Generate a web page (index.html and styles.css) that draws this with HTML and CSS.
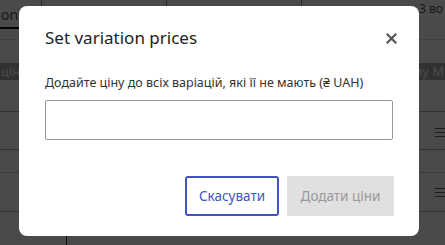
FILE: index.html
```html
<!DOCTYPE html>
<html lang="uk">
  <head>
    <meta charset="UTF-8" />
    <title>Set variation prices</title>
    <link rel="stylesheet" href="styles.css">
  </head>
  <body>
    <div class="page">
      <div class="tabs">
        <div class="tab tab-active">ons</div>
        <div class="tab tab-wide"></div>
        <div class="tab tab-wide">Bulk</div>
        <div class="tab tab-count">3 во</div>
      </div>
      <div class="spacer"></div>
      <div class="thead">
        <span>цін.</span>
        <span>ому М</span>
      </div>
      <div class="row row-a"></div>
      <div class="row row-b"><span class="handle"></span></div>
      <div class="row row-c"></div>
      <div class="row row-d"><span class="handle"></span></div>
      <div class="row row-e"><span class="cell-first"></span></div>
    </div>

    <div class="overlay">
      <div class="modal">
        <div class="modal-head">
          <h2>Set variation prices</h2>
          <button class="close" aria-label="Close">
            <svg width="11" height="11" viewBox="0 0 11 11">
              <path d="M1.5 1.5 L9.5 9.5 M9.5 1.5 L1.5 9.5" stroke="#555" stroke-width="2.2" stroke-linecap="square"/>
            </svg>
          </button>
        </div>
        <label class="field-label" for="price">Додайте ціну до всіх варіацій, які її не мають (₴ UAH)</label>
        <input type="text" id="price" class="field">
        <div class="actions">
          <button class="btn btn-outline">Скасувати</button>
          <button class="btn btn-disabled" disabled>Додати ціни</button>
        </div>
      </div>
    </div>
  </body>
</html>
```

FILE: styles.css
```css
body {
  margin: 0;
  font-family: "Noto Sans", "Open Sans", sans-serif;
  color: #222;
  background: #fff;
  overflow: hidden;
}

/* page behind the dialog */
.page {
  width: 445px;
  height: 245px;
  background: #fff;
  overflow: hidden;
}
.tabs {
  display: flex;
  height: 29px;
  font-size: 14px;
  color: #555;
}
.tab {
  width: 42px;
  padding: 5px 0 0 1px;
  border-right: 1px solid #888;
  box-sizing: border-box;
  white-space: nowrap;
  overflow: hidden;
}
.tab-active {
  border-bottom: 2px solid #112;
}
.tab-wide {
  width: 125px;
  padding-left: 20px;
}
.tab-wide + .tab-wide {
  width: 135px;
}
.tab-count {
  flex: 1;
  border-right: none;
  text-align: right;
  font-size: 12px;
  padding: 1px 2px 0 0;
  line-height: 16px;
}
.spacer {
  height: 10px;
  border-bottom: 1px solid #ddd;
}
.thead {
  display: flex;
  justify-content: space-between;
  margin-top: 23px;
  height: 17px;
  padding: 0 1px;
  background: #aaa;
  color: #fff;
  font-size: 13px;
  line-height: 17px;
}
.row {
  position: relative;
  border-bottom: 1px solid #aaa;
}
.row-a { height: 31px; }
.row-b { height: 37px; }
.row-c { height: 22px; border-bottom-color: #ccc; }
.row-d { height: 38px; }
.row-e { height: 33px; }
.handle {
  position: absolute;
  right: -2px;
  top: 14px;
  width: 12px;
  height: 7px;
  border-top: 1px solid #666;
  border-bottom: 1px solid #666;
}
.handle::after {
  content: "";
  position: absolute;
  left: 0;
  right: 0;
  top: 3px;
  border-top: 1px solid #666;
}
.row-b .handle { top: 16px; }
.row-d .handle { top: 15px; }
.cell-first {
  display: block;
  width: 66px;
  height: 100%;
  border-right: 1px solid #333;
}

/* dialog */
.overlay {
  position: fixed;
  inset: 0;
  background: rgba(0, 0, 0, 0.71);
  padding: 6px 0 0 19px;
}
.modal {
  width: 400px;
  height: 230px;
  background: #fff;
  border-radius: 8px;
  padding: 20px 26px 0 26px;
  box-sizing: border-box;
}
.modal-head {
  display: flex;
  justify-content: space-between;
  align-items: center;
  height: 22px;
}
.modal-head h2 {
  margin: 0;
  font-size: 17px;
  font-weight: normal;
  color: #222;
}
.close {
  border: none;
  background: none;
  padding: 0;
  margin-right: -4px;
  margin-top: 2px;
  width: 11px;
  height: 11px;
  display: flex;
}
.field-label {
  display: block;
  margin-top: 27px;
  font-size: 12.5px;
  color: #333;
  line-height: 16px;
}
.field {
  display: block;
  width: 348px;
  height: 40px;
  margin-top: 9px;
  border: 1px solid #999;
  border-radius: 2px;
  box-sizing: border-box;
}
.actions {
  display: flex;
  justify-content: flex-end;
  gap: 8px;
  margin-top: 36px;
  margin-right: -1px;
}
.btn {
  height: 40px;
  font-family: inherit;
  font-size: 13.5px;
  border-radius: 3px;
  box-sizing: border-box;
}
.btn-outline {
  width: 94px;
  border: 2px solid #4054c4;
  background: #fff;
  color: #4054c4;
}
.btn-disabled {
  width: 107px;
  border: none;
  background: #e0e0e0;
  color: #999;
  border-radius: 0;
}
```
